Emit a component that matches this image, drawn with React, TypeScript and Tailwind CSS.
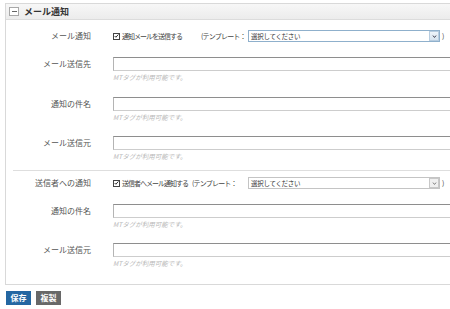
import React from "react";

const jp = { fontFamily: '"Noto Sans CJK JP", "Noto Sans", sans-serif' };

const CheckBox = () => (
  <span className="inline-flex items-center justify-center w-[7px] h-[7px] border border-[#444] bg-white shrink-0">
    <svg viewBox="0 0 8 8" className="w-[6px] h-[6px]">
      <path d="M1 4 L3 6 L7 1.5" fill="none" stroke="#111" strokeWidth="1.4" />
    </svg>
  </span>
);

const Label = ({ children }: { children: React.ReactNode }) => (
  <div className="w-[86px] shrink-0 text-right text-[8px] text-[#555] leading-none pr-[1px] whitespace-nowrap">
    {children}
  </div>
);

const Select = ({ disabled }: { disabled?: boolean }) => (
  <div
    className={`w-[192px] h-[12px] shrink-0 flex items-center bg-white border ${
      disabled ? "border-[#c4c4c4]" : "border-[#8fb0cc]"
    }`}
  >
    <span className="flex-1 pl-[2px] text-[6.5px] leading-none text-[#333] tracking-[-0.3px] whitespace-nowrap">
      選択してください
    </span>
    <span
      className={`w-[10px] h-[10px] flex items-center justify-center border ${
        disabled
          ? "border-[#c8c8c8] bg-[#f0f0f0]"
          : "border-[#b8cde0] bg-gradient-to-b from-[#eef4fa] to-[#d6e3ef]"
      }`}
    >
      <svg viewBox="0 0 8 8" className="w-[5px] h-[5px]">
        <path
          d="M1.5 2.5 L4 5.5 L6.5 2.5"
          fill="none"
          stroke={disabled ? "#777" : "#334"}
          strokeWidth="1.5"
        />
      </svg>
    </span>
  </div>
);

const Field = ({ label, className }: { label: string; className?: string }) => (
  <div className={`flex ${className ?? ""}`}>
    <div className="h-[14px] flex items-center">
      <Label>{label}</Label>
    </div>
    <div className="ml-[21px] flex-1 flex flex-col">
      <div className="h-[14px] bg-white border border-[#cdcdcd] border-t-[#8e8e8e] border-l-[#b4b4b4]" />
      <div className="mt-[2px] h-[9px] text-[6.5px] leading-[9px] italic text-[#b8b8b8] whitespace-nowrap">
        MTタグが利用可能です。
      </div>
    </div>
  </div>
);

const CheckRow = ({
  label,
  text,
  textW,
  tplW,
  disabled,
  className,
}: {
  label: string;
  text: string;
  textW: string;
  tplW: string;
  disabled?: boolean;
  className?: string;
}) => (
  <div className={`flex items-center h-[12px] ${className ?? ""}`}>
    <Label>{label}</Label>
    <div className="ml-[21px] flex items-center">
      <CheckBox />
      <span
        className={`ml-[2px] ${textW} text-[7px] leading-none text-[#444] tracking-[-1px] whitespace-nowrap`}
      >
        {text}
      </span>
      <span
        className={`${tplW} text-[7px] leading-none text-[#444] tracking-[-0.8px] whitespace-nowrap`}
      >
        (テンプレート：
      </span>
      <Select disabled={disabled} />
      <span className="ml-[2px] text-[7px] leading-none text-[#444] whitespace-nowrap">)</span>
    </div>
  </div>
);

export default function App() {
  return (
    <div className="w-[450px] h-[309px] overflow-hidden bg-white" style={jp}>
      <div className="ml-[5px] mt-[3px] w-[470px] border border-[#d9d9d9]">
        <div className="h-[16px] flex items-center bg-gradient-to-b from-[#f7f7f7] to-[#ececec] border-b border-[#dcdcdc]">
          <span className="ml-[3px] w-[10px] h-[9px] border border-[#a8a8a8] bg-white flex items-center justify-center">
            <span className="w-[5px] h-[1px] bg-[#666]" />
          </span>
          <span className="ml-[5px] text-[9px] font-bold leading-none text-[#333]">
            メール通知
          </span>
        </div>

        <div className="pt-[10px] pb-[16px]">
          <CheckRow
            label="メール通知"
            text="通知メールを送信する"
            textW="w-[79px]"
            tplW="w-[47px]"
          />

          <Field label="メール送信先" className="mt-[15px]" />
          <Field label="通知の件名" className="mt-[15px]" />
          <Field label="メール送信元" className="mt-[14px]" />

          <div className="mt-[9px] ml-[7px] h-[1px] bg-[#dedede]" />

          <CheckRow
            label="送信者への通知"
            text="送信者へメール通知する"
            textW="w-[70px]"
            tplW="w-[56px]"
            disabled
            className="mt-[6px]"
          />

          <Field label="通知の件名" className="mt-[15px]" />
          <Field label="メール送信元" className="mt-[14px]" />
        </div>
      </div>

      <div className="mt-[6px] ml-[6px] flex gap-[5px]">
        <button className="w-[25px] h-[14px] bg-[#2467a2] text-white text-[8px] font-bold leading-none flex items-center justify-center">
          保存
        </button>
        <button className="w-[25px] h-[14px] bg-[#686868] text-white text-[8px] font-bold leading-none flex items-center justify-center">
          複製
        </button>
      </div>
    </div>
  );
}
